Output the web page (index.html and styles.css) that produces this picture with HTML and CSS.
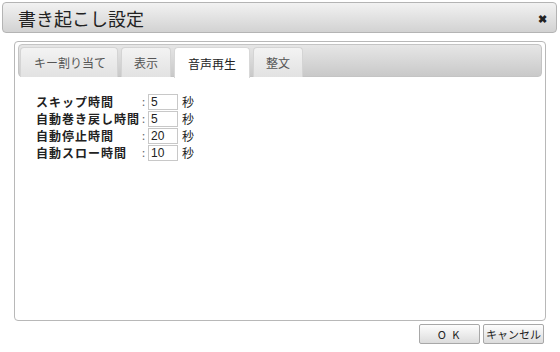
FILE: index.html
```html
<!DOCTYPE html>
<html lang="ja">
<head>
    <meta charset="UTF-8">
    <title>書き起こし設定</title>
    <link rel="stylesheet" href="styles.css">
</head>
<body>
    <div class="dialog">
        <div class="titlebar">
            <span class="title">書き起こし設定</span>
            <span class="close">&#10006;</span>
        </div>

        <div class="panel">
            <ul class="tabs">
                <li class="tab">キー割り当て</li>
                <li class="tab">表示</li>
                <li class="tab active">音声再生</li>
                <li class="tab">整文</li>
            </ul>
            <div class="content">
                <div class="row">
                    <label class="lbl">スキップ時間</label><span class="colon">:</span><input class="num" type="text" value="5"><span class="unit">秒</span>
                </div>
                <div class="row">
                    <label class="lbl">自動巻き戻し時間</label><span class="colon">:</span><input class="num" type="text" value="5"><span class="unit">秒</span>
                </div>
                <div class="row">
                    <label class="lbl">自動停止時間</label><span class="colon">:</span><input class="num" type="text" value="20"><span class="unit">秒</span>
                </div>
                <div class="row">
                    <label class="lbl">自動スロー時間</label><span class="colon">:</span><input class="num" type="text" value="10"><span class="unit">秒</span>
                </div>
            </div>
        </div>

        <div class="buttons">
            <button class="btn ok">O K</button>
            <button class="btn">キャンセル</button>
        </div>
    </div>
</body>
</html>
```

FILE: styles.css
```css
body { margin: 0; background: #fff; font-family: "Noto Sans CJK JP", "Liberation Sans", sans-serif; color: #222; }
.dialog { width: 560px; height: 352px; padding-top: 2px; box-sizing: border-box; }
.titlebar { margin: 0 3px 0 2px; height: 31px; box-sizing: border-box; border: 1px solid #b4b4b4; border-radius: 4px; background: linear-gradient(#f2f2f2, #d2d2d2); display: flex; align-items: center; justify-content: space-between; padding: 0 9px 0 15px; }
.title { font-size: 18px; color: #222; line-height: 1; }
.close { font-size: 11px; color: #222; font-weight: bold; }
.panel { margin: 8px 14px 0 14px; width: 532px; height: 280px; box-sizing: border-box; border: 1px solid #b8b8b8; border-radius: 4px; padding: 2px 3px; }
.tabs { list-style: none; margin: 0; height: 33px; box-sizing: border-box; padding: 2px 0 0 1px; display: flex; gap: 3px; border: 1px solid #c4c4c4; border-radius: 4px; background: linear-gradient(#e6e6e6, #c9c9c9); }
.tab { height: 30px; box-sizing: border-box; padding: 0 12px; display: flex; align-items: center; font-size: 12px; color: #555; border: 1px solid #d4d4d4; border-bottom: none; border-radius: 4px 4px 0 0; background: linear-gradient(#f3f3f3, #e2e2e2); }
.tab:first-child { padding: 0 11px 0 13px; }
.tab.active { background: #fff; color: #222; height: 31px; padding: 0 13px; border-color: #d8d8d8; }
.content { padding: 16px 0 0 18px; }
.row { display: flex; align-items: center; height: 17px; line-height: 17px; font-size: 12px; }
.lbl { width: 106px; font-weight: bold; color: #222; white-space: nowrap; letter-spacing: 1px; }
.colon { width: 6px; color: #666; font-size: 11px; }
.num { width: 30px; height: 16px; box-sizing: border-box; border: 1px solid #c8c8c8; padding: 0 2px; font: 12px "Liberation Sans", sans-serif; color: #222; }
.unit { margin-left: 4px; font-size: 12px; }
.buttons { display: flex; justify-content: flex-end; gap: 3px; margin: 3px 16px 0 0; }
.btn { height: 20px; width: 61px; padding: 0; border: 1px solid #a8a8a8; border-radius: 2px; background: linear-gradient(#fdfdfd, #dcdcdc); font: 11px "Noto Sans CJK JP", sans-serif; color: #222; }
.btn.ok { letter-spacing: 2px; }
```
